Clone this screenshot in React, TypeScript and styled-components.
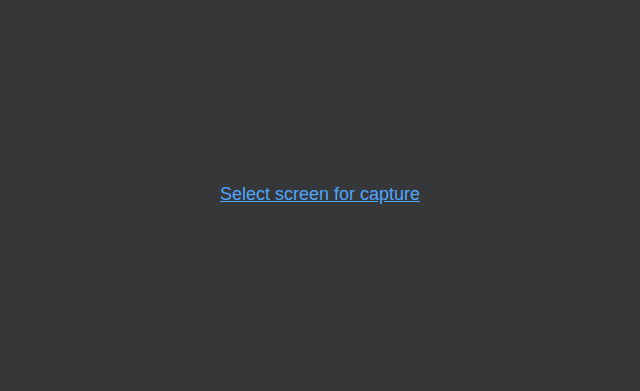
import styled, { createGlobalStyle } from "styled-components";

const GlobalStyle = createGlobalStyle`
  html, body, #root {
    margin: 0;
    height: 100%;
  }
  body {
    background: #363738;
    font-family: "Liberation Sans", Arial, sans-serif;
  }
`;

const StyledScreen = styled.div`
  height: 100vh;
  width: 100%;
  display: flex;
  align-items: center;
  justify-content: center;
  background: #363738;
`;

const StyledLink = styled.a`
  color: #4ea6ff;
  font-size: 18px;
  text-decoration: underline;
  cursor: pointer;
  margin-top: -2px;
`;

export default function App() {
  return (
    <>
      <GlobalStyle />
      <StyledScreen>
        <StyledLink href="#">Select screen for capture</StyledLink>
      </StyledScreen>
    </>
  );
}
